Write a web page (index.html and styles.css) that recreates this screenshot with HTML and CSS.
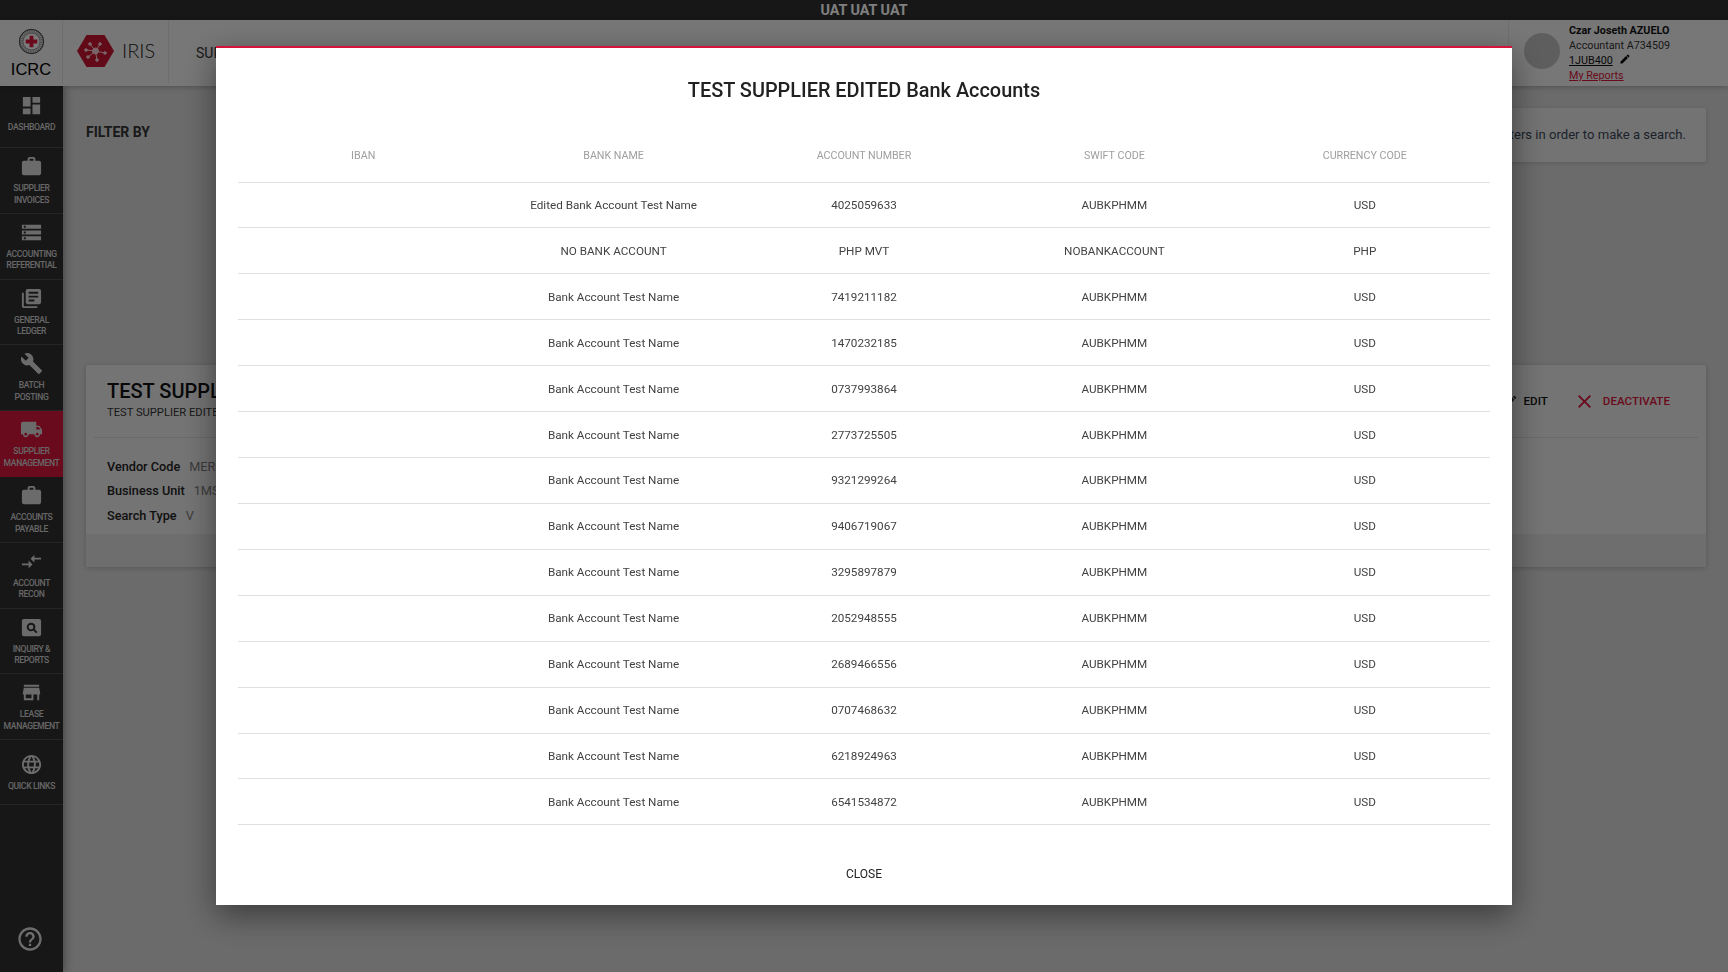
FILE: index.html
```html
<!DOCTYPE html>
<html lang="en">
<head>
<meta charset="utf-8">
<title>IRIS - Supplier Management</title>
<link rel="stylesheet" href="styles.css">
</head>
<body>
<div class="app">
  <div class="topbar">UAT UAT UAT</div>
  <header class="header">
    <div class="brand-icrc">
      <svg class="icrc-emblem" viewBox="0 0 28 28"><circle cx="14" cy="14" r="13" fill="#8a8a8a"/><circle cx="14" cy="14" r="12.600" fill="none" stroke="#333" stroke-width=".8"/><circle cx="14" cy="14" r="10.400" fill="none" stroke="#e8e8e8" stroke-width="2.600" stroke-dasharray="1 .8"/><circle cx="14" cy="14" r="8.400" fill="#f4f4f4"/><path fill="#d4143a" d="M12 8h4v4h4v4h-4v4h-4v-4H8v-4h4z"/></svg>
      <span class="icrc-name">ICRC</span>
    </div>
    <div class="brand-iris">
      <svg class="iris-hex" viewBox="0 0 37 32"><path fill="#c4152f" d="M9.500 0h18L37 16l-9.500 16h-18L0 16z"/><g stroke="#f4c9d0" stroke-width="1" fill="#f4c9d0"><path d="M18.500 16 L9 15 M18.500 16 L13 9 M18.500 16 L23 9 M18.500 16 L28 18 M18.500 16 L20 25 M18.500 16 L11 22"/><circle cx="18.500" cy="16" r="3"/><circle cx="9" cy="15" r="1.300"/><circle cx="13" cy="9" r="1.300"/><circle cx="23" cy="9" r="1.300"/><circle cx="28" cy="18" r="1.300"/><circle cx="20" cy="25" r="1.300"/><circle cx="11" cy="22" r="1.300"/></g></svg>
      <span class="iris-name">IRIS</span>
    </div>
    <div class="page-name">SUPPLIER MANAGEMENT</div>
    <div class="user">
      <div class="avatar"></div>
      <div class="user-lines">
        <div class="user-name">Czar Joseth AZUELO</div>
        <div>Accountant A734509</div>
        <div class="user-unit"><a class="unit-link">1JUB400</a><svg class="pencil" viewBox="0 0 24 24"><path d="M3 17.250V21h3.750L17.810 9.940l-3.750-3.750L3 17.250zM20.710 7.040c.39-.39.39-1.020 0-1.410l-2.340-2.340c-.39-.39-1.020-.39-1.410 0l-1.830 1.830 3.750 3.750 1.830-1.830z"/></svg></div>
        <div><a class="reports-link">My Reports</a></div>
      </div>
    </div>
  </header>
  <div class="body">
    <nav class="sidebar">
      <a class="nav-item first"><svg viewBox="0 0 24 24"><path d="M3 13h8V3H3v10zm0 8h8v-6H3v6zm10 0h8V11h-8v10zm0-18v6h8V3h-8z"/></svg><span>Dashboard</span></a>
      <a class="nav-item"><svg viewBox="0 0 24 24"><path d="M20 6h-4V4c0-1.110-.89-2-2-2h-4c-1.110 0-2 .89-2 2v2H4c-1.110 0-1.990.89-1.990 2L2 19c0 1.110.89 2 2 2h16c1.110 0 2-.89 2-2V8c0-1.110-.89-2-2-2zm-6 0h-4V4h4v2z"/></svg><span>Supplier<br>Invoices</span></a>
      <a class="nav-item"><svg viewBox="0 0 24 24"><path d="M2 20h20v-4H2v4zm2-3h2v2H4v-2zM2 4v4h20V4H2zm4 3H4V5h2v2zm-4 7h20v-4H2v4zm2-3h2v2H4v-2z"/></svg><span>Accounting<br>Referential</span></a>
      <a class="nav-item"><svg viewBox="0 0 24 24"><path d="M4 6H2v14c0 1.100.9 2 2 2h14v-2H4V6zm16-4H8c-1.100 0-2 .9-2 2v12c0 1.100.9 2 2 2h12c1.100 0 2-.9 2-2V4c0-1.100-.9-2-2-2zm-1 9H9V9h10v2zm-4 4H9v-2h6v2zm4-8H9V5h10v2z"/></svg><span>General<br>Ledger</span></a>
      <a class="nav-item"><svg viewBox="0 0 24 24"><path d="M22.700 19l-9.100-9.100c.9-2.300.4-5-1.500-6.900-2-2-5-2.400-7.400-1.300L9 6 6 9 1.600 4.700C.4 7.100.9 10.100 2.900 12.100c1.900 1.900 4.600 2.400 6.900 1.500l9.100 9.100c.4.4 1 .4 1.400 0l2.300-2.300c.5-.4.5-1.100.1-1.400z"/></svg><span>Batch<br>Posting</span></a>
      <a class="nav-item active"><svg viewBox="0 0 24 24"><path d="M20 8h-3V4H3c-1.100 0-2 .9-2 2v11h2c0 1.660 1.340 3 3 3s3-1.340 3-3h6c0 1.660 1.340 3 3 3s3-1.340 3-3h2v-5l-3-4zM6 18.500c-.83 0-1.500-.67-1.500-1.500s.67-1.500 1.500-1.500 1.500.67 1.500 1.500-.67 1.500-1.500 1.500zm13.500-9l1.960 2.500H17V9.500h2.500zm-1.500 9c-.83 0-1.500-.67-1.500-1.500s.67-1.500 1.500-1.500 1.500.67 1.500 1.500-.67 1.500-1.500 1.500z"/></svg><span>Supplier<br>Management</span></a>
      <a class="nav-item"><svg viewBox="0 0 24 24"><path d="M20 6h-4V4c0-1.110-.89-2-2-2h-4c-1.110 0-2 .89-2 2v2H4c-1.110 0-1.990.89-1.990 2L2 19c0 1.110.89 2 2 2h16c1.110 0 2-.89 2-2V8c0-1.110-.89-2-2-2zm-6 0h-4V4h4v2z"/></svg><span>Accounts<br>Payable</span></a>
      <a class="nav-item"><svg viewBox="0 0 24 24"><path d="M9.010 14H2v2h7.010v3L13 15l-3.990-4v3zm5.980-1v-3H22V8h-7.010V5L11 9l3.990 4z"/></svg><span>Account<br>Recon</span></a>
      <a class="nav-item"><svg viewBox="0 0 24 24"><path fill-rule="evenodd" d="M4 3h16a2 2 0 0 1 2 2v14a2 2 0 0 1-2 2H4a2 2 0 0 1-2-2V5a2 2 0 0 1 2-2zm7.500 4a4.500 4.500 0 1 0 2.500 8.240L16.800 18l1.400-1.400-2.760-2.760A4.500 4.500 0 0 0 11.500 7zm0 2a2.500 2.500 0 1 1 0 5 2.500 2.500 0 0 1 0-5z"/></svg><span>Inquiry &amp;<br>Reports</span></a>
      <a class="nav-item"><svg viewBox="0 0 24 24"><path d="M20 4H4v2h16V4zm1 10v-2l-1-5H4l-1 5v2h1v6h10v-6h4v6h2v-6h1zm-9 4H6v-4h6v4z"/></svg><span>Lease<br>Management</span></a>
      <a class="nav-item single"><svg viewBox="0 0 24 24"><path d="M11.990 2C6.470 2 2 6.480 2 12s4.470 10 9.990 10C17.520 22 22 17.520 22 12S17.520 2 11.990 2zm6.930 6h-2.950c-.32-1.250-.78-2.450-1.380-3.560 1.840.63 3.370 1.910 4.330 3.560zM12 4.040c.83 1.200 1.480 2.530 1.910 3.960h-3.820c.43-1.430 1.080-2.760 1.910-3.960zM4.260 14C4.100 13.360 4 12.690 4 12s.1-1.360.26-2h3.380c-.08.66-.14 1.320-.14 2 0 .68.06 1.340.14 2H4.260zm.82 2h2.950c.32 1.250.78 2.450 1.380 3.560-1.840-.63-3.370-1.900-4.330-3.560zm2.950-8H5.080c.96-1.660 2.490-2.930 4.330-3.560C8.810 5.550 8.350 6.750 8.030 8zM12 19.960c-.83-1.200-1.480-2.530-1.910-3.960h3.820c-.43 1.430-1.080 2.760-1.910 3.960zM14.340 14H9.660c-.09-.66-.16-1.320-.16-2 0-.68.07-1.350.16-2h4.680c.09.65.16 1.320.16 2 0 .68-.07 1.340-.16 2zm.25 5.560c.6-1.110 1.060-2.310 1.380-3.560h2.950c-.96 1.650-2.490 2.930-4.330 3.560zM16.360 14c.08-.66.14-1.320.14-2 0-.68-.06-1.340-.14-2h3.380c.16.64.26 1.310.26 2s-.1 1.360-.26 2h-3.380z"/></svg><span>Quick Links</span></a>
      <a class="help"><svg viewBox="0 0 24 24"><path d="M11 18h2v-2h-2v2zm1-16C6.480 2 2 6.480 2 12s4.480 10 10 10 10-4.480 10-10S17.520 2 12 2zm0 18c-4.410 0-8-3.590-8-8s3.590-8 8-8 8 3.590 8 8-3.590 8-8 8zm0-14c-2.210 0-4 1.790-4 4h2c0-1.100.9-2 2-2s2 .9 2 2c0 2-3 1.750-3 5h2c0-2.250 3-2.500 3-5 0-2.210-1.790-4-4-4z"/></svg></a>
    </nav>
    <main class="main">
      <div class="filter-row">
        <div class="filter-title">FILTER BY</div>
        <div class="hint">Please use one or more of the available filters in order to make a search.</div>
      </div>
      <section class="card">
        <div class="card-head">
          <div>
            <h2 class="card-title">TEST SUPPLIER EDITED</h2>
            <div class="card-sub">TEST SUPPLIER EDITED</div>
          </div>
          <div class="card-actions">
            <a class="act-edit"><svg viewBox="0 0 24 24"><path d="M3 17.250V21h3.750L17.810 9.940l-3.750-3.750L3 17.250zM20.710 7.040c.39-.39.39-1.020 0-1.410l-2.340-2.340c-.39-.39-1.020-.39-1.410 0l-1.830 1.830 3.750 3.750 1.830-1.830z"/></svg>EDIT</a>
            <a class="act-off"><svg viewBox="5 5 14 14"><path d="M19 6.410L17.590 5 12 10.590 6.410 5 5 6.410 10.590 12 5 17.590 6.410 19 12 13.410 17.590 19 19 17.590 13.410 12z"/></svg>DEACTIVATE</a>
          </div>
        </div>
        <div class="card-body">
          <div class="field field-a"><b>Vendor Code</b><span>MERCHANT</span></div>
          <div class="field field-b"><b>Business Unit</b><span>1MS00</span></div>
          <div class="field field-c"><b>Search Type</b><span>V</span></div>
        </div>
        <div class="card-foot"></div>
      </section>
    </main>
  </div>
</div>
<div class="backdrop"></div>
<div class="modal">
  <h1 class="modal-title">TEST SUPPLIER EDITED Bank Accounts</h1>
  <table class="accounts">
    <thead><tr><th>IBAN</th><th>BANK NAME</th><th>ACCOUNT NUMBER</th><th>SWIFT CODE</th><th>CURRENCY CODE</th></tr></thead>
    <tbody>
      <tr><td></td><td>Edited Bank Account Test Name</td><td>4025059633</td><td>AUBKPHMM</td><td>USD</td></tr>
      <tr><td></td><td>NO BANK ACCOUNT</td><td>PHP MVT</td><td>NOBANKACCOUNT</td><td>PHP</td></tr>
      <tr><td></td><td>Bank Account Test Name</td><td>7419211182</td><td>AUBKPHMM</td><td>USD</td></tr>
      <tr><td></td><td>Bank Account Test Name</td><td>1470232185</td><td>AUBKPHMM</td><td>USD</td></tr>
      <tr><td></td><td>Bank Account Test Name</td><td>0737993864</td><td>AUBKPHMM</td><td>USD</td></tr>
      <tr><td></td><td>Bank Account Test Name</td><td>2773725505</td><td>AUBKPHMM</td><td>USD</td></tr>
      <tr><td></td><td>Bank Account Test Name</td><td>9321299264</td><td>AUBKPHMM</td><td>USD</td></tr>
      <tr><td></td><td>Bank Account Test Name</td><td>9406719067</td><td>AUBKPHMM</td><td>USD</td></tr>
      <tr><td></td><td>Bank Account Test Name</td><td>3295897879</td><td>AUBKPHMM</td><td>USD</td></tr>
      <tr><td></td><td>Bank Account Test Name</td><td>2052948555</td><td>AUBKPHMM</td><td>USD</td></tr>
      <tr><td></td><td>Bank Account Test Name</td><td>2689466556</td><td>AUBKPHMM</td><td>USD</td></tr>
      <tr><td></td><td>Bank Account Test Name</td><td>0707468632</td><td>AUBKPHMM</td><td>USD</td></tr>
      <tr><td></td><td>Bank Account Test Name</td><td>6218924963</td><td>AUBKPHMM</td><td>USD</td></tr>
      <tr><td></td><td>Bank Account Test Name</td><td>6541534872</td><td>AUBKPHMM</td><td>USD</td></tr>
    </tbody>
  </table>
  <div class="modal-foot"><button class="close-btn">CLOSE</button></div>
</div>
</body>
</html>
```
FILE: styles.css
```css
* { box-sizing: border-box; }
html, body { margin: 0; height: 100%; overflow: hidden; }
body { font-family: Roboto, "Liberation Sans", sans-serif; color: #333; background: #d6d6d6; }

.app { display: flex; flex-direction: column; height: 972px; }
.topbar { height: 20px; flex: none; background: #2e2e2e; color: #fff; font-size: 14.300px; font-weight: 700; line-height: 20px; text-align: center; }

.header { height: 66px; flex: none; display: flex; align-items: stretch; background: #eeeeee; position: relative; z-index: 2; box-shadow: 0 1px 5px rgba(0,0,0,.25); }
.brand-icrc { width: 63px; flex: none; display: flex; flex-direction: column; align-items: center; padding-top: 8px; border-right: 1px solid #dcdcdc; margin-bottom: 3px; }
.icrc-emblem { width: 27px; height: 27px; display: block; }
.icrc-name { font-family: "Liberation Sans", Arial, sans-serif; font-size: 16.500px; line-height: 20px; margin-top: 4px; color: #000; }
.brand-iris { width: 106px; flex: none; display: flex; align-items: center; padding-left: 14px; gap: 8px; border-right: 1px solid #dcdcdc; margin-bottom: 3px; }
.iris-hex { width: 37px; height: 32px; display: block; margin-top: -2px; }
.iris-name { font-family: Lato, sans-serif; font-weight: 300; font-size: 20px; color: #222; margin-top: -4px; }
.page-name { padding-left: 27px; padding-top: 25px; font-size: 14px; line-height: 16px; color: #333; }
.user { margin-left: auto; width: 220px; display: flex; border-left: 1px solid #dcdcdc; margin-bottom: 3px; padding: 3px 0 0 15px; gap: 9px; font-size: 10.750px; line-height: 15px; color: #333; }
.avatar { width: 36px; height: 36px; border-radius: 50%; background: #bdbdbd; margin-top: 10px; flex: none; }
.user-name { font-weight: 700; color: #111; }
.user-unit { display: flex; align-items: center; gap: 6px; }
.unit-link { color: #111; text-decoration: underline; }
.reports-link { color: #d4143a; text-decoration: underline; }
.pencil { width: 12px; height: 12px; fill: #000; margin-top: -3px; }

.body { flex: 1; display: flex; min-height: 0; }
.sidebar { width: 63px; flex: none; background: #2e2e2e; display: flex; flex-direction: column; position: relative; z-index: 1; box-shadow: 2px 0 8px rgba(0,0,0,.35); }
.nav-item { height: 65.800px; flex: none; display: flex; flex-direction: column; align-items: center; padding-top: 7px; border-bottom: 1px solid #4a4a4a; color: #cfcfcf; font-size: 8.600px; letter-spacing: -.35px; font-weight: 500; line-height: 11.600px; text-transform: uppercase; text-align: center; white-space: nowrap; }
.nav-item svg { width: 23px; height: 23px; fill: #d6d6d6; flex: none; margin-bottom: 5px; }
.nav-item.first { height: 62px; padding-top: 8px; }
.nav-item.first svg { margin-bottom: 5px; }
.nav-item.single { height: 65px; padding-top: 13px; }
.nav-item.single svg { margin-bottom: 5px; }
.nav-item.active { background: #d4143a; border-bottom-color: #d4143a; }
.help { margin-top: auto; margin-bottom: 19px; margin-left: 16px; width: 28px; height: 28px; }
.help svg { width: 28px; height: 28px; fill: #dcdcdc; display: block; }

.main { flex: 1; min-width: 0; padding: 22px 22px 0 23px; }
.filter-row { display: flex; justify-content: space-between; align-items: flex-start; height: 257px; }
.filter-title { font-size: 14px; font-weight: 700; line-height: 16px; color: #333; margin-top: 16px; }
.hint { width: 700px; height: 54px; background: #e6e6e6; border-radius: 2px; font-size: 13.100px; line-height: 54px; text-align: right; padding-right: 20px; color: #3a4555; box-shadow: 0 1px 4px rgba(0,0,0,.15); }
.card { background: #e8e8e8; border-radius: 2px; box-shadow: 0 1px 5px rgba(0,0,0,.2); height: 202px; display: flex; flex-direction: column; }
.card-head { height: 73px; flex: none; margin: 0 8px; padding: 14px 13px 0 13px; display: flex; justify-content: space-between; border-bottom: 1px solid #d4d4d4; }
.card-title { margin: 0; font-size: 20px; font-weight: 500; line-height: 24px; color: #111; }
.card-sub { font-size: 11.200px; line-height: 14px; margin-top: 3px; color: #333; }
.card-actions { display: flex; align-items: center; gap: 30px; font-size: 11.600px; font-weight: 500; height: 40px; padding-right: 15px; margin-top: 2px; }
.act-edit { display: flex; align-items: center; gap: 6px; color: #111; }
.act-edit svg { width: 14px; height: 14px; fill: #333; }
.act-off { display: flex; align-items: center; gap: 12px; color: #d4143a; }
.act-off svg { width: 13px; height: 13px; fill: #d4143a; }
.card-body { flex: 1; padding: 21px 21px 0; font-size: 12.700px; line-height: 16px; }
.field { display: flex; gap: 9px; }
.field-b { margin-top: 8px; }
.field-c { margin-top: 9px; }
.field b { font-weight: 500; color: #222; }
.field span { color: #777; }
.card-foot { height: 33px; flex: none; background: #dadcda; border-radius: 0 0 2px 2px; }

.backdrop { position: fixed; inset: 0; background: rgba(0,0,0,.5); z-index: 10; }
.modal { position: fixed; left: 216px; top: 46px; width: 1296px; height: 859px; background: #fff; border-top: 2px solid #d4143a; padding: 0 22px; z-index: 11; box-shadow: 0 10px 30px rgba(0,0,0,.45); display: flex; flex-direction: column; }
.modal-title { margin: 0; height: 80px; padding-top: 31px; font-size: 19.900px; font-weight: 500; line-height: 24px; text-align: center; color: #212121; flex: none; }
.accounts { width: 100%; border-collapse: collapse; table-layout: fixed; flex: none; }
.accounts th { height: 54px; font-size: 10.700px; font-weight: 400; color: #9e9e9e; text-align: center; padding: 2px 0 0; border-bottom: 1px solid #e0e0e0; }
.accounts td { height: 45.930px; font-size: 11.700px; color: #424242; text-align: center; padding: 0; border-bottom: 1px solid #e0e0e0; }
.modal-foot { flex: 1; display: flex; justify-content: center; padding-top: 39px; }
.close-btn { background: none; border: 0; padding: 0; height: 20px; font-family: Roboto, sans-serif; font-size: 12px; font-weight: 400; color: #222; }
```
